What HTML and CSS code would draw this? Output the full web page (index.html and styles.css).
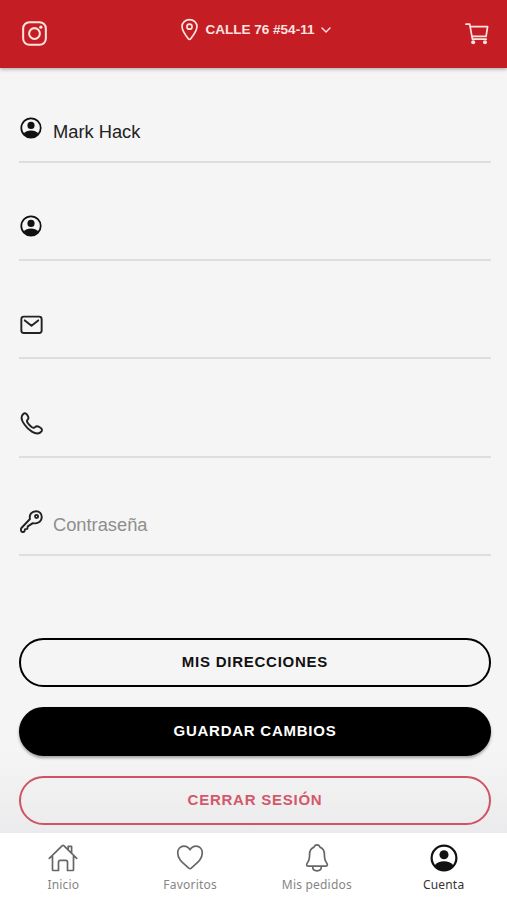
FILE: index.html
```html
<!DOCTYPE html>
<html lang="es">
<head>
  <meta charset="UTF-8">
  <title>Cuenta</title>
  <meta name="viewport" content="width=device-width, initial-scale=1.0">
  <link rel="stylesheet" href="styles.css">
</head>
<body>
  <!-- Shared icon -->
  <svg class="sprite" xmlns="http://www.w3.org/2000/svg">
    <symbol id="person" viewBox="0 0 24 24">
      <circle cx="12" cy="12" r="10.6" fill="none" stroke="currentColor" stroke-width="1.9"/>
      <circle cx="12" cy="9.2" r="3.9" fill="currentColor"/>
      <path fill="currentColor" d="M4 18.300c1.800-2.500 4.600-3.600 8-3.600s6.200 1.100 8 3.600c-2 2.800-4.800 4.400-8 4.400s-6-1.600-8-4.400z"/>
    </symbol>
  </svg>

  <header class="header">
    <svg class="header-icon" viewBox="0 0 26 26">
      <rect x="1.200" y="1.200" width="23.600" height="23.600" rx="6.500"/>
      <circle cx="13" cy="13" r="5.600"/>
      <circle class="dot" cx="19.600" cy="6.400" r="1.700"/>
    </svg>
    <div class="address">
      <svg class="pin" viewBox="0 0 18 23">
        <path d="M9 1C4.600 1 1.100 4.200 1.100 8.300c0 4.500 4.300 10 6.600 12.900.7.900 1.900.9 2.600 0 2.300-2.900 6.600-8.400 6.600-12.900C16.900 4.200 13.400 1 9 1z"/>
        <circle cx="9" cy="8.500" r="2.700"/>
      </svg>
      <span class="address-text">CALLE 76 #54-11</span>
      <svg class="chevron" viewBox="0 0 10 6"><path d="M1 1l4 4 4-4"/></svg>
    </div>
    <svg class="cart" viewBox="0 0 24 22">
      <path d="M1 1.200h3.700l2.700 15h13.800M5.300 3.700h17.300l-1.500 9.600H6.900"/>
      <circle class="dot" cx="8.200" cy="19.200" r="2"/>
      <circle class="dot" cx="20" cy="19.200" r="2"/>
    </svg>
  </header>

  <main class="content">
    <!-- Account fields -->
    <div class="field">
      <svg class="field-icon person"><use href="#person"/></svg>
      <input type="text" value="Mark Hack" aria-label="Nombre">
    </div>
    <div class="field">
      <svg class="field-icon person"><use href="#person"/></svg>
      <input type="text" aria-label="Apellido">
    </div>
    <div class="field">
      <svg class="field-icon" viewBox="0 0 24 24">
        <rect x="1.400" y="3.800" width="21.200" height="17" rx="2.600"/>
        <path d="M5 7.700l7 5.600 7-5.600"/>
      </svg>
      <input type="email" aria-label="Correo">
    </div>
    <div class="field">
      <svg class="field-icon" viewBox="0 0 24 24">
        <path d="M3.400 2C5 .6 6.600 1.200 8.200 4.200c1.100 2 .9 2.800-.3 3.800-1.200 1.100-1.100 2.100.9 4.500 1 1.200 2.200 2.300 3.300 3.100 1.900 1.300 2.700 1.300 3.700.2 1.200-1.300 2.200-1.400 4.400-.1 2.700 1.600 3.300 2.900 2.200 4.500-2.200 2.900-5.400 3.200-10 .3-3-1.900-5.500-4.300-7.500-7.200C1.400 8.700.4 4.700 3.400 2z"/>
      </svg>
      <input type="tel" aria-label="Teléfono">
    </div>
    <div class="field">
      <svg class="field-icon" viewBox="0 0 24 24">
        <path d="M16.800 1.300c-4.500 0-7.400 3.500-6.400 8.100L1.500 18.800c-.7.700-.7 2.900.1 3.700.8.800 2.400.6 3-.2l.7-2.300 2.300-.3.500-2.600 5.300-3.400c4.500 1.100 9.100-1.600 9.300-6.200.1-3.800-2.400-6.200-5.900-6.200z"/>
        <circle cx="17.300" cy="6.700" r="1.600"/>
      </svg>
      <input type="password" placeholder="Contraseña">
    </div>

    <!-- Actions -->
    <div class="actions">
      <button class="btn">MIS DIRECCIONES</button>
      <button class="btn btn-solid">GUARDAR CAMBIOS</button>
      <button class="btn btn-danger">CERRAR SESIÓN</button>
    </div>
  </main>

  <nav class="tabs">
    <a class="tab">
      <svg viewBox="0 0 30 30">
        <path d="M4.500 13.500v13.200c0 .5.300.8.800.8h5.200v-8.400c0-1 .8-1.800 1.800-1.800h5.400c1 0 1.800.8 1.800 1.800v8.400h5.200c.5 0 .8-.3.800-.8V13.500M1.300 15.300L14.300 2.700c.5-.4 1-.4 1.500 0l12.900 12.600M20.200 6.500V3.400h3.400v6.500"/>
      </svg>
      <span>Inicio</span>
    </a>
    <a class="tab">
      <svg viewBox="0 0 30 30">
        <path d="M15 6.700C13.400 4.200 11.200 3.100 8.900 3.100c-3.500 0-6.200 2.900-6.200 6.600 0 7 5.800 10.500 11.100 15.400.8.700 1.600.7 2.400 0C21.500 20.200 27.300 16.700 27.300 9.700c0-3.700-2.700-6.600-6.200-6.600-2.300 0-4.500 1.100-6.100 3.600z"/>
      </svg>
      <span>Favoritos</span>
    </a>
    <a class="tab">
      <svg viewBox="0 0 30 30">
        <path d="M24.500 19.800c-1.600-2-2.100-3.300-2.100-8.200 0-4.300-2-6.700-4.500-7.500-.4-1.500-1.400-2.300-2.900-2.300s-2.500.8-2.900 2.300c-2.500.8-4.500 3.200-4.500 7.500 0 4.900-.5 6.200-2.100 8.200-1.200 1.500-1.300 3.300.6 3.300h17.800c1.900 0 1.800-1.800.6-3.300zM19.300 23.300v.7c0 2.300-1.900 3.800-4.300 3.800s-4.300-1.500-4.300-3.800v-.7"/>
      </svg>
      <span>Mis pedidos</span>
    </a>
    <a class="tab active">
      <svg class="person"><use href="#person"/></svg>
      <span>Cuenta</span>
    </a>
  </nav>
</body>
</html>
```

FILE: styles.css
```css
* {
  box-sizing: border-box;
}
body {
  margin: 0;
  height: 900px;
  display: flex;
  flex-direction: column;
  overflow: hidden;
  font-family: "Liberation Sans", Arial, sans-serif;
  background: linear-gradient(#f5f5f5 750px, #ebebed 833px);
}
svg {
  display: block;
  flex-shrink: 0;
  fill: none;
  stroke: currentColor;
  stroke-linecap: round;
  stroke-linejoin: round;
}
.sprite {
  position: absolute;
  width: 0;
  height: 0;
}
.dot {
  fill: currentColor;
  stroke: none;
}
.person {
  stroke: none;
}

/* Header */
.header {
  height: 68px;
  flex-shrink: 0;
  display: flex;
  justify-content: space-between;
  align-items: flex-start;
  padding: 0 18px 0 22px;
  background: #c41e24;
  color: #ffe3e0;
  box-shadow: 0 1px 4px rgba(0, 0, 0, 0.35);
}
.header-icon {
  width: 25px;
  height: 25px;
  margin-top: 21px;
  stroke-width: 2.1;
}
.address {
  display: flex;
  align-items: center;
  margin-top: 18px;
}
.pin {
  width: 17px;
  height: 23px;
  stroke-width: 1.8;
}
.address-text {
  margin: 0 7px 1px 8px;
  font-size: 13.5px;
  font-weight: bold;
}
.chevron {
  width: 10px;
  height: 6px;
  stroke-width: 1.4;
}
.cart {
  width: 24px;
  height: 22px;
  margin-top: 23px;
  stroke-width: 1.7;
}

/* Fields */
.content {
  flex: 1;
  padding: 41px 16px 0 19px;
}
.field {
  display: flex;
  height: 54px;
  margin-bottom: 44.2px;
  border-bottom: 2px solid #dddee1;
}
.field-icon {
  width: 23px;
  height: 23px;
  margin: 8px 0 0 1px;
  color: #222;
  stroke-width: 2;
}
.field-icon.person {
  width: 22px;
  height: 22px;
  margin-right: 1px;
  color: #111;
}
.field input {
  flex: 1;
  height: 30px;
  margin: 8px 0 0 10px;
  padding: 0;
  border: none;
  outline: none;
  background: none;
  font-family: inherit;
  font-size: 18.3px;
  color: #222;
}
.field input::placeholder {
  color: #8e8e8e;
}

/* Buttons */
.actions {
  display: flex;
  flex-direction: column;
  gap: 20px;
  margin-top: 82px;
}
.btn {
  height: 49px;
  padding: 0 0 2px;
  border: 2px solid #000;
  border-radius: 25px;
  background: transparent;
  color: #111;
  font-family: inherit;
  font-size: 15px;
  font-weight: bold;
  letter-spacing: 0.75px;
}
.btn-solid {
  background: #000;
  color: #fff;
  box-shadow: 0 2px 3px rgba(0, 0, 0, 0.35);
}
.btn-danger {
  border-color: #cf5364;
  color: #d2586a;
}

/* Bottom tabs */
.tabs {
  display: flex;
  height: 67px;
  flex-shrink: 0;
  background: #fff;
}
.tab {
  flex: 1;
  display: flex;
  flex-direction: column;
  align-items: center;
  padding-top: 10px;
  font-family: "Noto Sans", sans-serif;
  font-size: 12px;
  line-height: 17px;
  letter-spacing: 0.2px;
  color: #858585;
}
.tab svg {
  width: 30px;
  height: 30px;
  margin-bottom: 3px;
  color: #666;
  stroke-width: 1.7;
}
.tab.active {
  color: #333;
}
.tab .person {
  width: 28px;
  height: 28px;
  margin: 1px 0 4px;
  color: #111;
}
```
